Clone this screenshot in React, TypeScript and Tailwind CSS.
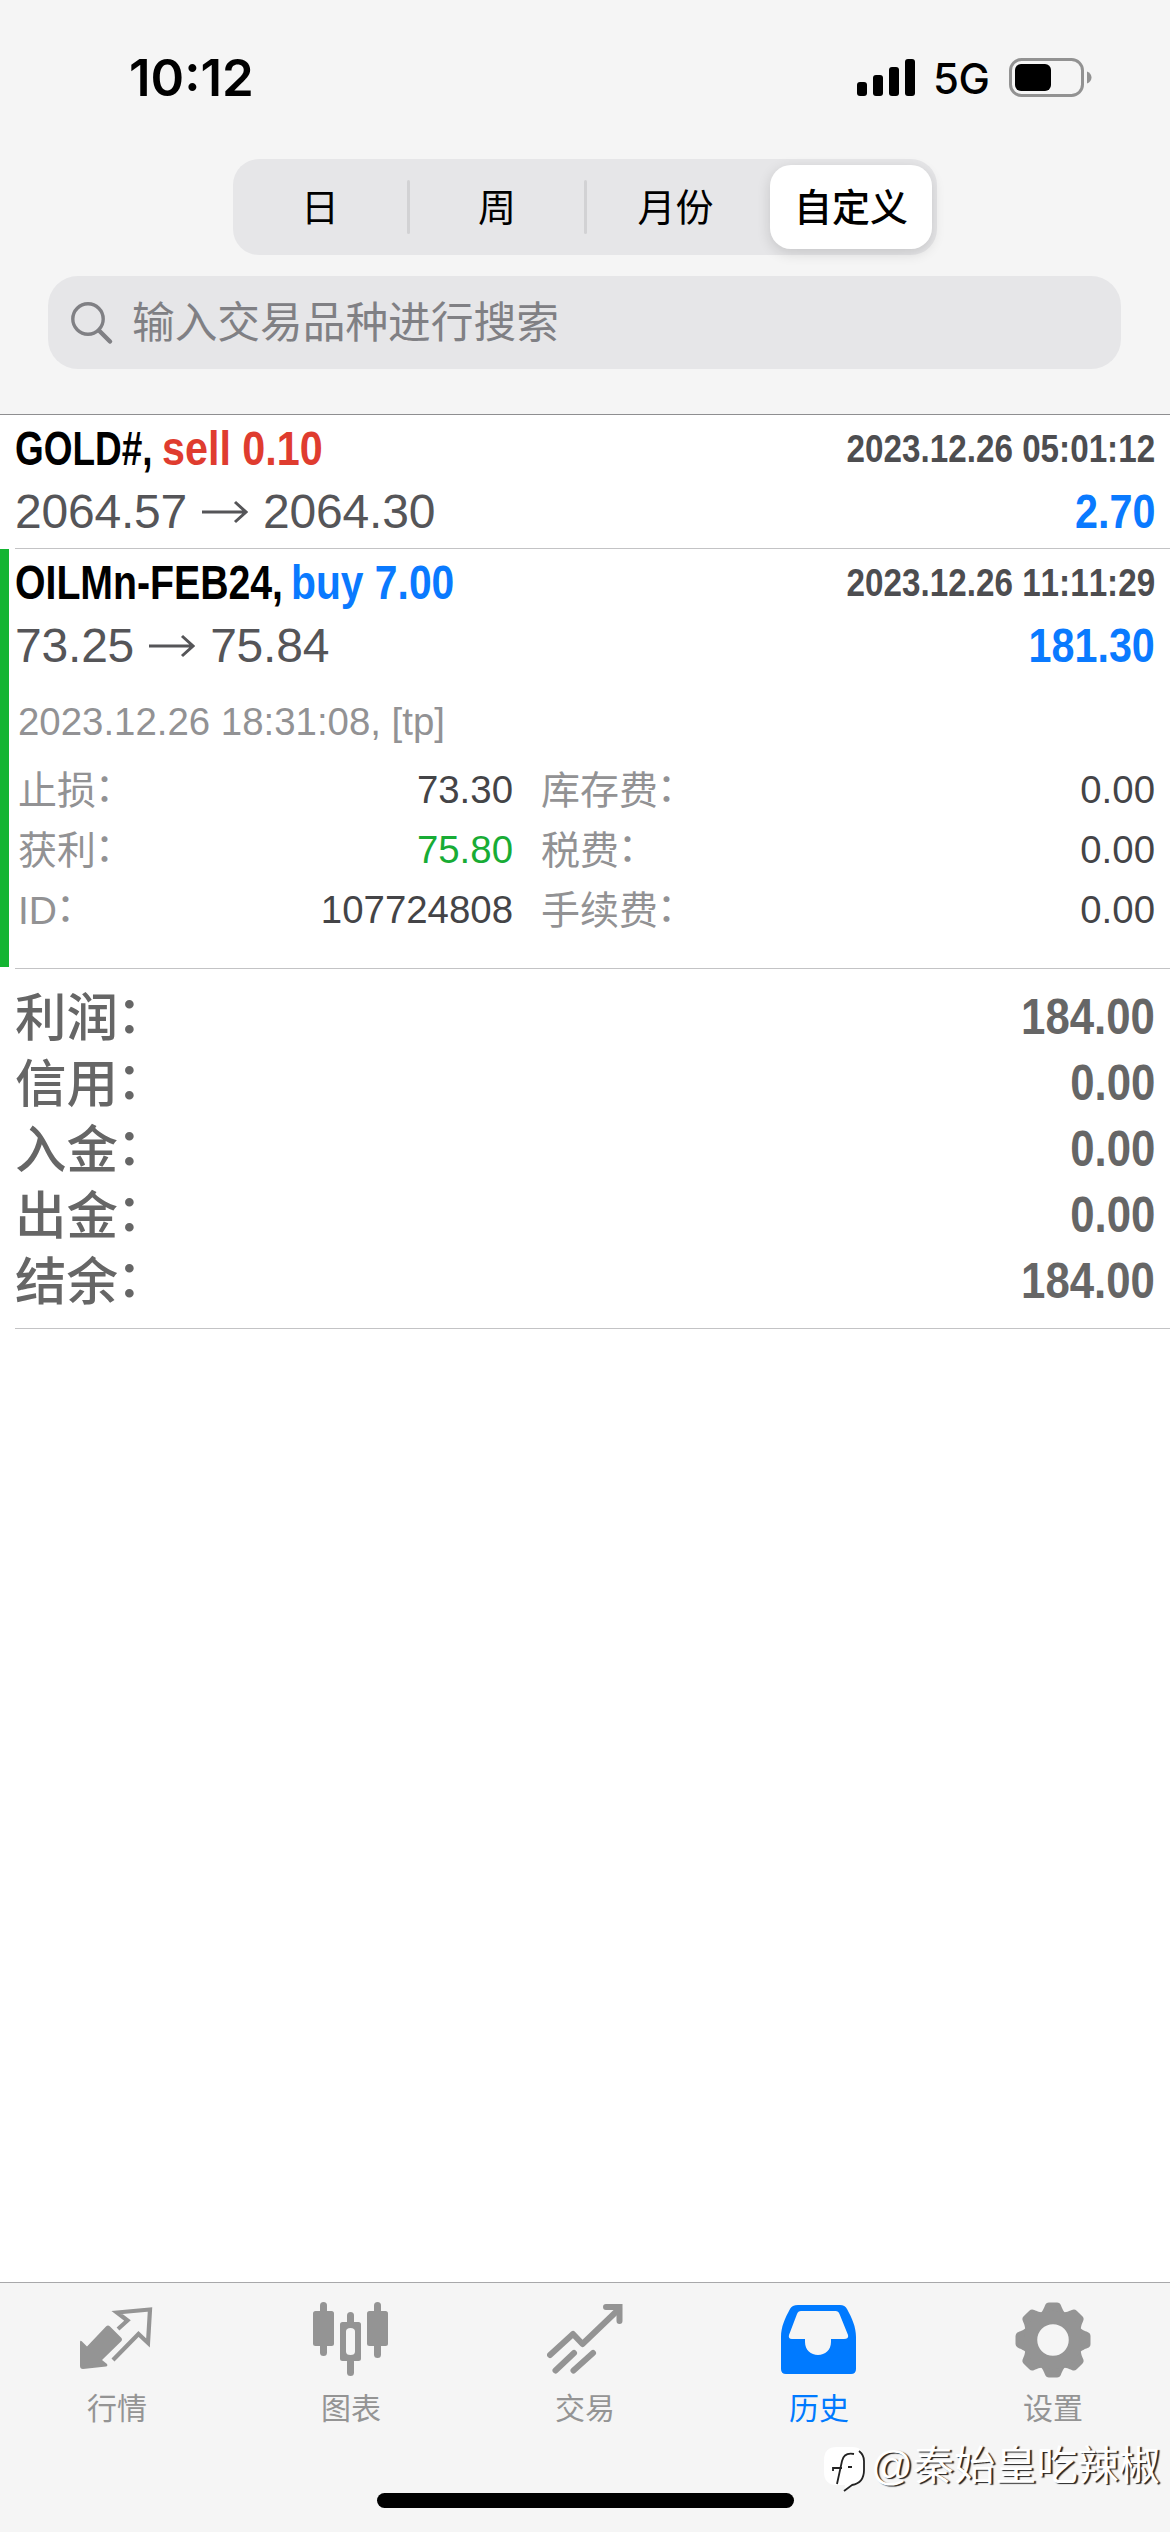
import type { ReactNode } from "react";

const periods = ["日", "周", "月份", "自定义"];

const details = [
  { left: "止损", value: "73.30", tone: "text-[#444447]", right: "库存费", cost: "0.00" },
  { left: "获利", value: "75.80", tone: "text-[#18ac35]", right: "税费", cost: "0.00" },
  { left: "ID", value: "107724808", tone: "text-[#444447]", right: "手续费", cost: "0.00" },
];

const summary = [
  { label: "利润", value: "184.00" },
  { label: "信用", value: "0.00" },
  { label: "入金", value: "0.00" },
  { label: "出金", value: "0.00" },
  { label: "结余", value: "184.00" },
];

function StatusBar() {
  return (
    <div className="flex h-[159px] items-start justify-between pl-[129px] pr-[77px] pt-[48px] text-black">
      <div className="font-['Inter',sans-serif] text-[51px] font-semibold leading-[60px]">
        10:12
      </div>
      <div className="flex h-[60px] items-center">
        <svg width="59" height="38" viewBox="0 0 59 38">
          <rect x="0" y="23" width="10" height="14" rx="3" />
          <rect x="16" y="16" width="10" height="21" rx="3" />
          <rect x="32" y="8" width="10" height="29" rx="3" />
          <rect x="48" y="0" width="10" height="37" rx="3" />
        </svg>
        <span className="ml-[17px] w-[58px] pt-[2px] font-['Inter',sans-serif] text-[42px] font-medium leading-[60px] tracking-[-0.5px]">
          5G
        </span>
        <svg className="ml-[18px]" width="84" height="40" viewBox="0 0 84 40">
          <rect x="1.5" y="1.5" width="72" height="36" rx="11" fill="none" stroke="#929292" strokeWidth="3" />
          <rect x="6" y="6" width="36" height="27" rx="6" />
          <path d="M78 13.5c3 1 4.5 3.500 4.500 6s-1.500 5-4.500 6z" fill="#929292" />
        </svg>
      </div>
    </div>
  );
}

function PeriodSwitch() {
  return (
    <div className="ml-[233px] flex h-[96px] w-[704px] rounded-[26px] bg-[#e6e6e8] py-[6px] pr-[5px] text-[38px] text-black">
      {periods.map((name, i) =>
        i === 3 ? (
          <div
            key={name}
            className="ml-[6px] flex w-[162px] items-center justify-center rounded-[21px] bg-white pt-[2px] font-medium shadow-[0_4px_14px_rgba(0,0,0,0.14)]"
          >
            {name}
          </div>
        ) : (
          <div key={name} className="flex flex-1 items-center">
            <div className="flex-1 pt-[2px] text-center">{name}</div>
            {i < 2 && <div className="h-[54px] w-[3px] rounded-full bg-[#d2d2d4]" />}
          </div>
        ),
      )}
    </div>
  );
}

function SearchField() {
  return (
    <div className="ml-[48px] mt-[21px] flex h-[93px] w-[1073px] items-center rounded-[30px] bg-[#e6e6e8] pl-[22px] text-[#808084]">
      <svg width="44" height="44" viewBox="0 0 44 44" fill="none" stroke="currentColor">
        <circle cx="18" cy="18" r="15.200" strokeWidth="3.400" />
        <path d="M29 29.500l11 11" strokeWidth="4.500" strokeLinecap="round" />
      </svg>
      <span className="ml-[18px] pt-px text-[42.700px]">输入交易品种进行搜索</span>
    </div>
  );
}

function Arrow() {
  return (
    <svg className="mx-[15px]" width="46" height="24" viewBox="0 0 46 24" fill="none" stroke="currentColor" strokeWidth="3">
      <path d="M0 12h43M33 2l11 10-11 10" />
    </svg>
  );
}

type DealProps = {
  title: ReactNode;
  time: string;
  open: string;
  close: string;
  profit: string;
};

function Deal({ title, time, open, close, profit }: DealProps) {
  return (
    <div className="px-[15px] pt-[4px]">
      <div className="flex h-[60px] items-center justify-between font-bold">
        <div className="flex whitespace-nowrap text-[48px]">{title}</div>
        <div className="origin-right scale-x-[0.852] whitespace-nowrap pb-[2px] text-[39px] text-[#4d4d50]">{time}</div>
      </div>
      <div className="flex h-[66px] items-center justify-between text-[48px]">
        <div className="flex items-center tracking-[-0.200px] text-[#555558]">
          {open}
          <Arrow />
          {close}
        </div>
        <div className="origin-right scale-x-[0.86] font-bold text-[#0a7aff]">{profit}</div>
      </div>
    </div>
  );
}

function Label({ children }: { children: string }) {
  return (
    <span>
      {children}
      <span className="relative -left-[0.030em] -top-[0.055em]">：</span>
    </span>
  );
}

function Details() {
  return (
    <div className="pl-[18px] pr-[15px] pt-[13px] text-[38.400px] text-[#929294]">
      <div className="flex h-[60px] items-center">2023.12.26 18:31:08, [tp]</div>
      <div className="mt-[8px]">
        {details.map((row) => (
          <div key={row.left} className="flex h-[60px] items-center text-[39px]">
            <div className="flex w-[495px] items-center justify-between">
              <Label>{row.left}</Label>
              <span className={`text-[38.400px] ${row.tone}`}>{row.value}</span>
            </div>
            <div className="ml-[28px] flex flex-1 items-center justify-between">
              <Label>{row.right}</Label>
              <span className="text-[38.400px] text-[#444447]">{row.cost}</span>
            </div>
          </div>
        ))}
      </div>
    </div>
  );
}

function Summary() {
  return (
    <div className="ml-[15px] h-[360px] border-b border-[#c3c3c5] pr-[15px] pt-[15px] text-[#666666]">
      {summary.map(({ label, value }) => (
        <div key={label} className="flex h-[66px] items-center justify-between">
          <span className="pt-[4px] text-[51.500px] font-medium">
            <Label>{label}</Label>
          </span>
          <span className="origin-right scale-x-[0.875] text-[50px] font-bold">
            {value}
          </span>
        </div>
      ))}
    </div>
  );
}

function QuotesIcon() {
  return (
    <svg width="76" height="76" viewBox="0 -4 76 76">
      <path
        d="M1 36.500c0-2 1-2 2-1l5 5L27 20.500q2-2 4 0L42 31.500q2 2 0 4L23 54l5 4q1 2-1 2.500L4 63q-3 0-3-3z"
        fill="currentColor"
      />
      <path
        d="M39 23l9.500-8.500L38 6.500 71 3.500 69 37l-9.500-9L34 54"
        fill="none"
        stroke="currentColor"
        strokeWidth="4.200"
      />
    </svg>
  );
}

function ChartIcon() {
  return (
    <svg width="76" height="76" viewBox="0 0 76 76" fill="currentColor">
      <rect x="7" y="0" width="7" height="54" rx="3.500" />
      <rect x="0" y="9" width="21" height="35" rx="2.500" />
      <rect x="61" y="0" width="7" height="56" rx="3.500" />
      <rect x="54" y="9" width="21" height="35" rx="2.500" />
      <rect x="34" y="10" width="7" height="14" rx="3.500" />
      <rect x="34" y="56" width="7" height="18" rx="3.500" />
      <path fillRule="evenodd" d="M29.500 20h16q2.500 0 2.500 2.500v34q0 2.500-2.500 2.500h-16q-2.500 0-2.500-2.500v-34q0-2.500 2.500-2.500zM37.500 26q-4.500 0-4.500 3.500v20q0 3.500 4.500 3.500t4.500-3.500v-20q0-3.500-4.500-3.500z" />
    </svg>
  );
}

function TradeIcon() {
  return (
    <svg width="76" height="76" viewBox="0 0 76 76" fill="none" stroke="currentColor" strokeWidth="6" strokeLinecap="round">
      <path d="M3 53l23-21 9.500 10L72 7" strokeLinejoin="round" />
      <path d="M59 5h13.500v14" />
      <path d="M8.500 68.500L27 51M26.500 68.500L46 51" />
      <path d="M66 2.500h9v9z" fill="currentColor" stroke="none" />
    </svg>
  );
}

function HistoryIcon() {
  return (
    <svg width="76" height="76" viewBox="0 0 76 76" fill="currentColor">
      <path
        fillRule="evenodd"
        d="M17 3h42q5 0 7 4c5 9 9 18 9 28v32q0 5-5 5H5q-5 0-5-5V35c0-10 4-19 9-28q2-4 8-4zM20 9q-3 0-4 3L8 33q-1 4 3 4h13v3c0 8 6 13 13 13s13-5 13-13v-3h13q5 0 4-4L58.500 12q-1-3-4-3z"
      />
    </svg>
  );
}

function SettingsIcon() {
  return (
    <svg width="76" height="76" viewBox="-38 -38 76 76">
      <g fill="currentColor">
        {[0, 45, 90, 135, 180, 225, 270, 315].map((angle) => (
          <path
            key={angle}
            transform={`rotate(${angle})`}
            d="M-14-25C-10-29-9-32-8-34.500Q-7-37.500-4-37.500H4Q7-37.500 8-34.500C9-32 10-29 14-25z"
          />
        ))}
      </g>
      <circle r="22.500" fill="none" stroke="currentColor" strokeWidth="13.500" />
    </svg>
  );
}

const tabs = [
  { name: "行情", icon: <QuotesIcon /> },
  { name: "图表", icon: <ChartIcon /> },
  { name: "交易", icon: <TradeIcon /> },
  { name: "历史", icon: <HistoryIcon />, active: true },
  { name: "设置", icon: <SettingsIcon /> },
];

function Watermark() {
  return (
    <div className="absolute bottom-[36px] right-[10px] flex items-center text-[41.200px] leading-[60px] text-white [text-shadow:2px_1px_1px_#222]">
      <svg className="mr-[4px] mt-[8px]" width="44" height="48" viewBox="0 0 44 48">
        <path d="M14 1h15q12 0 12 13v10q0 13-12 15l-8 7 1-7h-8Q1 39 1 26V14Q1 1 14 1z" fill="#fff" />
        <path d="M36 5q5 4 5 10v9q0 13-12 15l-8 6" fill="none" stroke="#222" strokeWidth="1.800" />
        <path d="M31 8q-10-2-12 7l-5 23M10 25v-3h9M25 21h4" fill="none" stroke="#222" strokeWidth="1.800" />
      </svg>
      @秦始皇吃辣椒
    </div>
  );
}

function TabBar() {
  return (
    <div className="relative h-[250px] border-t border-[#a8a8aa] bg-[#f5f5f5]">
      <div className="flex pt-[19px]">
        {tabs.map(({ name, icon, active }) => (
          <div
            key={name}
            className={`flex w-[234px] flex-col items-center ${active ? "text-[#007aff]" : "text-[#949494]"}`}
          >
            {icon}
            <span className="mt-[9px] text-[30px] leading-[44px]">{name}</span>
          </div>
        ))}
      </div>
      <Watermark />
      <div className="absolute bottom-[24px] left-[377px] h-[15px] w-[417px] rounded-full bg-black" />
    </div>
  );
}

export default function App() {
  return (
    <div className="flex h-[2532px] w-[1170px] flex-col overflow-hidden bg-white font-['Liberation_Sans','Noto_Sans_CJK_SC',sans-serif] leading-none [font-kerning:none]">
      <header className="h-[415px] border-b border-[#8e8e90] bg-[#f5f5f5]">
        <StatusBar />
        <PeriodSwitch />
        <SearchField />
      </header>
      <main className="flex-1">
        <div className="h-[133px]">
          <Deal
            title={
              <>
                <span className="w-[147px] origin-left scale-x-[0.77]">GOLD#,</span>
                <span className="origin-left scale-x-[0.86] text-[#df3c2f]">sell 0.10</span>
              </>
            }
            time="2023.12.26 05:01:12"
            open="2064.57"
            close="2064.30"
            profit="2.70"
          />
        </div>
        <div className="ml-[15px] h-px bg-[#c3c3c5]" />
        <div className="relative h-[419px]">
          <div className="absolute left-0 top-0 h-[418px] w-[9px] bg-[#14b532]" />
          <Deal
            title={
              <>
                <span className="w-[276px] origin-left scale-x-[0.817]">OILMn-FEB24,</span>
                <span className="origin-left scale-x-[0.85] text-[#0a7aff]">buy 7.00</span>
              </>
            }
            time="2023.12.26 11:11:29"
            open="73.25"
            close="75.84"
            profit="181.30"
          />
          <Details />
        </div>
        <div className="ml-[15px] h-px bg-[#c3c3c5]" />
        <Summary />
      </main>
      <TabBar />
    </div>
  );
}
